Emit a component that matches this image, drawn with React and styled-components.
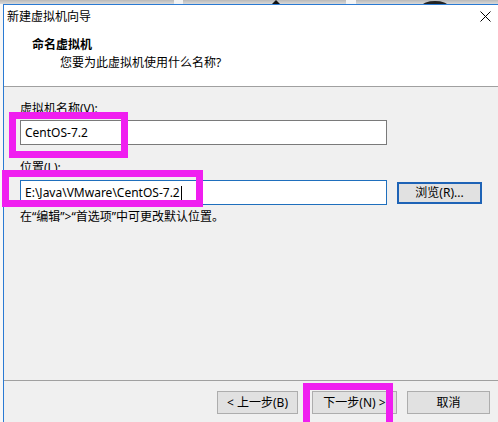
import React from "react";
import styled, { createGlobalStyle } from "styled-components";

const GlobalStyle = createGlobalStyle`
  html, body {
    margin: 0;
    padding: 0;
    background: #f7f7f7;
  }
  body {
    width: 498px;
    height: 422px;
    overflow: hidden;
    font-family: "Noto Sans", "Noto Sans CJK SC", sans-serif;
    font-size: 12px;
    color: #000;
  }
`;

const FONT = `"Noto Sans", "Noto Sans CJK SC", sans-serif`;

const Screen = styled.div`
  position: relative;
  width: 498px;
  height: 422px;
  overflow: hidden;
  display: flex;
  flex-direction: column;
  background: #f7f7f7;
`;

const Backdrop = styled.div`
  flex: none;
  height: 4px;
  background: linear-gradient(to bottom, #b9b9b9, #d9d9d9);
  svg {
    display: block;
  }
`;

const Window = styled.div`
  flex: 1;
  min-height: 0;
  margin-left: 3px;
  display: flex;
  flex-direction: column;
  border-left: 1px solid #2a7ad3;
  border-top: 1px solid #2a7ad3;
  background: #f0f0f0;
`;

const TitleBar = styled.div`
  height: 23px;
  display: flex;
  align-items: center;
  justify-content: space-between;
  padding: 0 7px 0 3px;
  background: #fff;
  line-height: 16px;
`;

const Header = styled.div`
  background: #fff;
  padding: 9px 0 15px 28px;
  border-bottom: 1px solid #a0a0a0;
`;

const HeaderTitle = styled.div`
  font-weight: 700;
  line-height: 16px;
`;

const HeaderSub = styled.div`
  margin-top: 2px;
  padding-left: 28px;
  line-height: 16px;
`;

const Body = styled.div`
  flex: 1;
  display: flex;
  flex-direction: column;
  align-items: flex-start;
  padding: 14px 0 0 16px;
`;

const Label = styled.div`
  line-height: 16px;
  margin-top: ${(p) => p.$gap || 0}px;
`;

const FieldRow = styled.div`
  display: flex;
  align-items: center;
  margin-top: ${(p) => p.$gap || 0}px;
`;

const TextBox = styled.div`
  box-sizing: border-box;
  width: 367px;
  height: 25px;
  display: flex;
  align-items: center;
  padding-left: 4px;
  background: #fff;
  border: 1px solid ${(p) => (p.$focused ? "#1f6fbd" : "#7a7a7a")};
  line-height: 16px;
  white-space: nowrap;
`;

const Caret = styled.span`
  display: inline-block;
  width: 1px;
  height: 14px;
  margin-left: 1px;
  background: #000;
`;

const Button = styled.button`
  box-sizing: border-box;
  width: ${(p) => p.$w || 83}px;
  height: ${(p) => p.$h || 23}px;
  margin: 0;
  margin-left: ${(p) => p.$ml || 0}px;
  padding: 0;
  font-family: ${FONT};
  font-size: 12px;
  line-height: 16px;
  color: #000;
  background: #e1e1e1;
  border: ${(p) => (p.$default ? "2px solid #1e63b6" : "1px solid #adadad")};
  white-space: nowrap;
`;

const Hint = styled.div`
  margin-top: 4px;
  line-height: 16px;
`;

const Footer = styled.div`
  flex: none;
  height: 31px;
  border-top: 1px solid #a0a0a0;
  display: flex;
  justify-content: flex-end;
  align-items: flex-start;
  padding: 10px 8px 0 0;
  box-sizing: content-box;
`;

const Highlight = styled.div`
  position: absolute;
  box-sizing: border-box;
  border: 7px solid #f01ef0;
  pointer-events: none;
`;

const CloseIcon = () => (
  <svg width="11" height="11" viewBox="0 0 11 11">
    <path d="M0.5 0.5 L10.5 10.5 M10.5 0.5 L0.5 10.5" stroke="#000" strokeWidth="1" />
  </svg>
);

const BackdropArt = () => (
  <svg width="498" height="4" viewBox="0 0 498 4">
    <rect x="174" y="0" width="9" height="4" fill="#f2f2f2" />
    <rect x="346" y="0" width="10" height="4" fill="#f4f4f4" />
    <path d="M272 4 L276 0 L280 4 Z" fill="#111" />
    <ellipse cx="435" cy="6" rx="13" ry="5" fill="#222" />
  </svg>
);

const boxes = [
  { left: 9, top: 112, width: 119, height: 46 },
  { left: 2, top: 170, width: 201, height: 37 },
  { left: 303, top: 383, width: 90, height: 50 },
];

export default function App() {
  return (
    <>
      <GlobalStyle />
      <Screen>
        <Backdrop>
          <BackdropArt />
        </Backdrop>
        <Window>
          <TitleBar>
            <span>新建虚拟机向导</span>
            <CloseIcon />
          </TitleBar>
          <Header>
            <HeaderTitle>命名虚拟机</HeaderTitle>
            <HeaderSub>您要为此虚拟机使用什么名称?</HeaderSub>
          </Header>
          <Body>
            <Label>虚拟机名称(V):</Label>
            <FieldRow $gap={3}>
              <TextBox>CentOS-7.2</TextBox>
            </FieldRow>
            <Label $gap={15}>位置(L):</Label>
            <FieldRow $gap={4}>
              <TextBox $focused>
                E:\Java\VMware\CentOS-7.2
                <Caret />
              </TextBox>
              <Button $default $w={85} $h={22} $ml={10}>
                浏览(R)...
              </Button>
            </FieldRow>
            <Hint>在“编辑”&gt;“首选项”中可更改默认位置。</Hint>
          </Body>
          <Footer>
            <Button $w={81}>&lt; 上一步(B)</Button>
            <Button $w={85} $ml={14}>
              下一步(N) &gt;
            </Button>
            <Button $w={83} $ml={10}>
              取消
            </Button>
          </Footer>
        </Window>
        {boxes.map((b, i) => (
          <Highlight key={i} style={b} />
        ))}
      </Screen>
    </>
  );
}
